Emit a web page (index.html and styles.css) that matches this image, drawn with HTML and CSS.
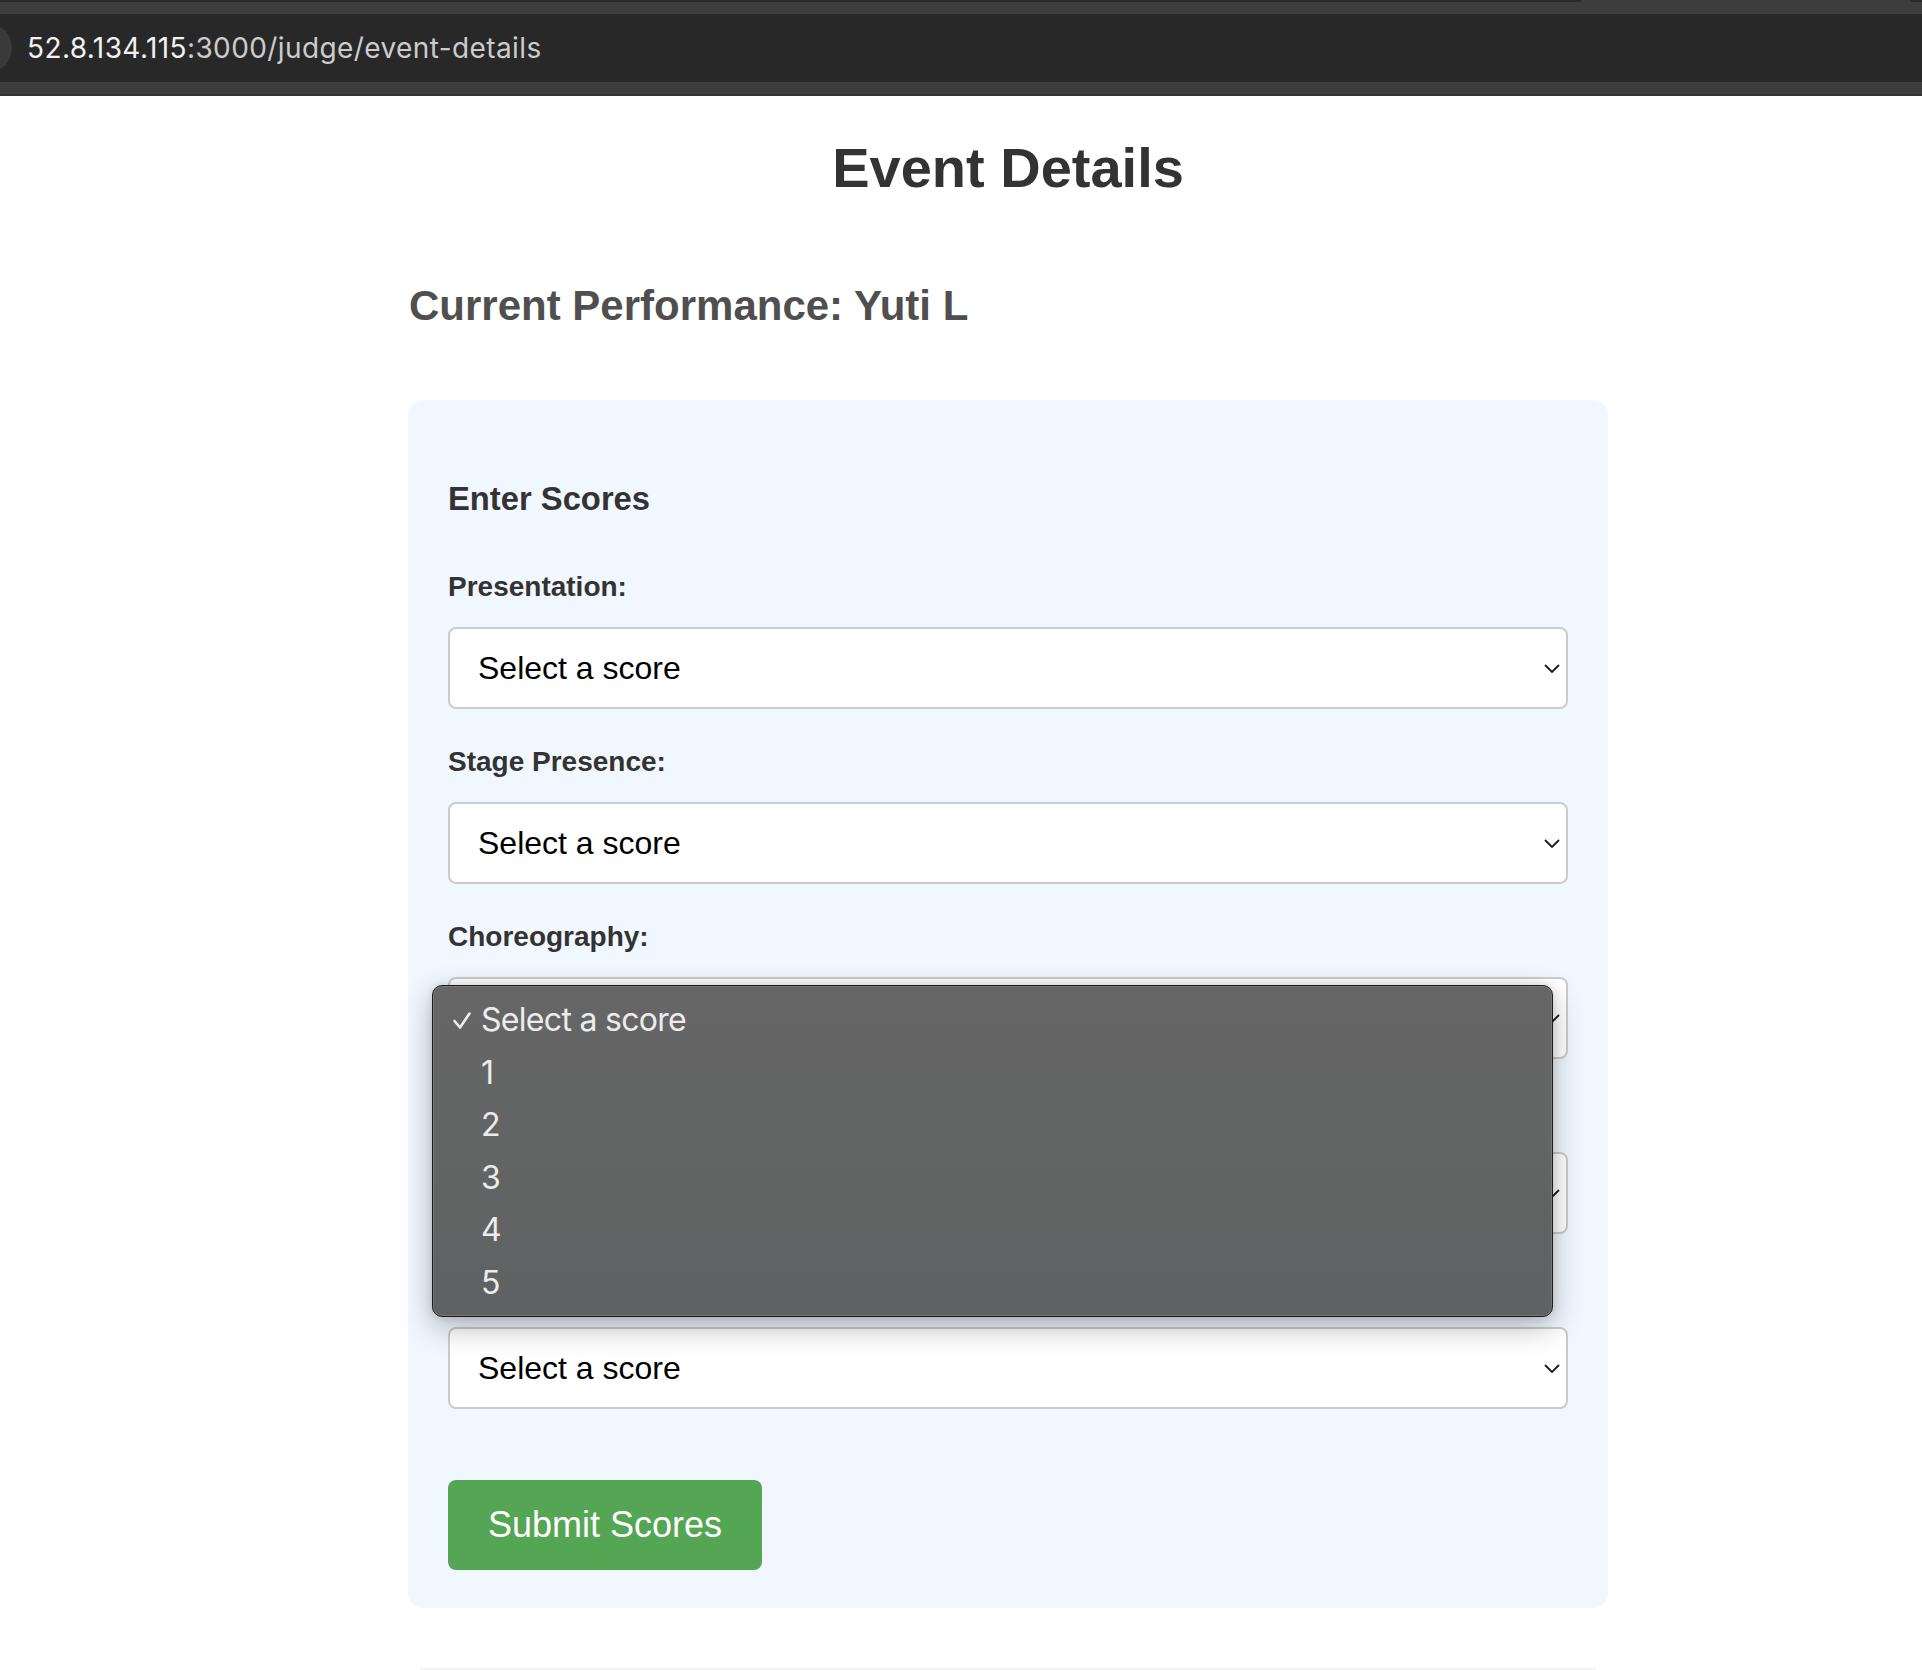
FILE: index.html
```html
<!DOCTYPE html>
<html lang="en">
<head>
<meta charset="utf-8">
<title>Event Details</title>
<link rel="stylesheet" href="styles.css">
</head>
<body>
<div class="chrome">
  <div class="tabstrip"><span class="tab-left"></span><span class="tab-gap"></span><span class="tab-right"></span></div>
  <div class="omnibox">
    <span class="site-icon"></span>
    <span class="url"><span class="host">52.8.134.115</span><span class="path">:3000/judge/event-details</span></span>
  </div>
  <div class="chrome-line"></div>
</div>

<main class="page">
  <h1 class="title">Event Details</h1>
  <h2 class="current">Current Performance: Yuti L</h2>

  <section class="card">
    <h3 class="card-title">Enter Scores</h3>

    <div class="field">
      <label class="label">Presentation:</label>
      <div class="select"><span>Select a score</span><svg class="chev" width="16" height="9" viewBox="0 0 16 9"><polyline points="1,1 8,8 15,1" fill="none" stroke="#1a1a1a" stroke-width="1.8"/></svg></div>
    </div>
    <div class="field">
      <label class="label">Stage Presence:</label>
      <div class="select"><span>Select a score</span><svg class="chev" width="16" height="9" viewBox="0 0 16 9"><polyline points="1,1 8,8 15,1" fill="none" stroke="#1a1a1a" stroke-width="1.8"/></svg></div>
    </div>
    <div class="field">
      <label class="label">Choreography:</label>
      <div class="select"><span>Select a score</span><svg class="chev" width="16" height="9" viewBox="0 0 16 9"><polyline points="1,1 8,8 15,1" fill="none" stroke="#1a1a1a" stroke-width="1.8"/></svg></div>
    </div>
    <div class="field">
      <label class="label">Technique:</label>
      <div class="select"><span>Select a score</span><svg class="chev" width="16" height="9" viewBox="0 0 16 9"><polyline points="1,1 8,8 15,1" fill="none" stroke="#1a1a1a" stroke-width="1.8"/></svg></div>
    </div>
    <div class="field">
      <label class="label">Overall Impression:</label>
      <div class="select"><span>Select a score</span><svg class="chev" width="16" height="9" viewBox="0 0 16 9"><polyline points="1,1 8,8 15,1" fill="none" stroke="#1a1a1a" stroke-width="1.8"/></svg></div>
    </div>

    <button class="btn" type="button">Submit Scores</button>

    <div class="menu">
      <div class="item"><span class="mark"><svg width="18" height="18" viewBox="0 0 18 18"><polyline points="1.5,10 7,16.5 16.5,2.5" fill="none" stroke="#eeeeee" stroke-width="2.6" stroke-linecap="round" stroke-linejoin="round"/></svg></span>Select a score</div>
      <div class="item"><span class="mark"></span>1</div>
      <div class="item"><span class="mark"></span>2</div>
      <div class="item"><span class="mark"></span>3</div>
      <div class="item"><span class="mark"></span>4</div>
      <div class="item"><span class="mark"></span>5</div>
    </div>
  </section>

  <div class="footer-line"></div>
</main>
</body>
</html>
```

FILE: styles.css
```css
html, body {
  margin: 0;
  padding: 0;
}

body {
  width: 1922px;
  height: 1670px;
  overflow: hidden;
  background: #ffffff;
  font-family: "Liberation Sans", Arial, Helvetica, sans-serif;
  color: #333333;
}

/* ---------- browser chrome ---------- */
.chrome {
  height: 96px;
  background: #3d3d3d;
  display: flex;
  flex-direction: column;
}

.tabstrip {
  height: 2px;
  display: flex;
}

.tab-left {
  width: 1581px;
  background: #2a2a2a;
  border-bottom-right-radius: 2px;
}

.tab-gap {
  flex: 1;
}

.tab-right {
  width: 12px;
  background: #2a2a2a;
  border-bottom-left-radius: 2px;
}

.omnibox {
  margin-top: 12px;
  height: 68px;
  background: #282828;
  display: flex;
  align-items: center;
  overflow: hidden;
}

.site-icon {
  flex: none;
  width: 50px;
  height: 50px;
  margin-left: -38px;
  border-radius: 50%;
  background: #3a3a3a;
}

.url {
  margin-left: 15px;
  font-family: Inter, "Noto Sans", sans-serif;
  font-size: 28px;
  letter-spacing: 0.4px;
  white-space: nowrap;
}

.host {
  color: #f2f2f2;
}

.path {
  color: #cccccc;
}

.chrome-line {
  margin-top: 12px;
  height: 2px;
  background: #333333;
}

/* ---------- page ---------- */
.page {
  width: 1200px;
  margin-left: 408px;
}

.title {
  margin: 40px 0 0;
  font-size: 56px;
  line-height: 64px;
  font-weight: bold;
  text-align: center;
  color: #333333;
}

.current {
  margin: 82px 0 0 1px;
  font-size: 42px;
  line-height: 48px;
  font-weight: bold;
  color: #4f4f4f;
}

.card {
  position: relative;
  margin-top: 70px;
  padding: 40px 40px 38px;
  background: #f0f7fe;
  border-radius: 14px;
}

.card-title {
  margin: 39.6px 0 0;
  font-size: 32.76px;
  line-height: 38px;
  font-weight: bold;
  color: #333333;
}

.field {
  margin-bottom: 37px;
}

.field:first-of-type {
  margin-top: 53.5px;
}

.label {
  display: block;
  margin-bottom: 24px;
  font-size: 28px;
  line-height: 32px;
  font-weight: bold;
  color: #333333;
}

.select {
  box-sizing: border-box;
  height: 82px;
  display: flex;
  align-items: center;
  justify-content: space-between;
  padding: 0 6px 0 28px;
  background: #ffffff;
  border: 2px solid #cbcbcb;
  border-radius: 8px;
  font-size: 32px;
  color: #000000;
}

.chev {
  flex: none;
  display: block;
}

.btn {
  display: block;
  margin-top: 70.7px;
  height: 90px;
  padding: 0 40px;
  border: none;
  border-radius: 8px;
  background: #54a654;
  color: #ffffff;
  font-family: "Liberation Sans", Arial, Helvetica, sans-serif;
  font-size: 36px;
}

/* ---------- native select popup ---------- */
.menu {
  position: absolute;
  left: 23.5px;
  top: 584.7px;
  width: 1121px;
  box-sizing: border-box;
  padding: 8px 0 7.5px;
  border: 1px solid #1c1c1c;
  border-radius: 10px;
  background: linear-gradient(180deg, #666666 0%, #636464 50%, #5f6162 100%);
  box-shadow: inset 0 0 0 1px rgba(255, 255, 255, 0.13), 0 10px 30px rgba(0, 0, 0, 0.28), 0 0 8px rgba(0, 0, 0, 0.12);
}

.item {
  height: 52.5px;
  display: flex;
  align-items: center;
  padding-left: 20px;
  font-family: Inter, "Noto Sans", sans-serif;
  font-size: 32px;
  letter-spacing: -0.7px;
  color: #ececec;
}

.mark {
  flex: none;
  width: 28.5px;
  display: flex;
  align-items: center;
}

.footer-line {
  margin: 60px 12px 0;
  border-top: 2px solid #f3f3f3;
}
```
